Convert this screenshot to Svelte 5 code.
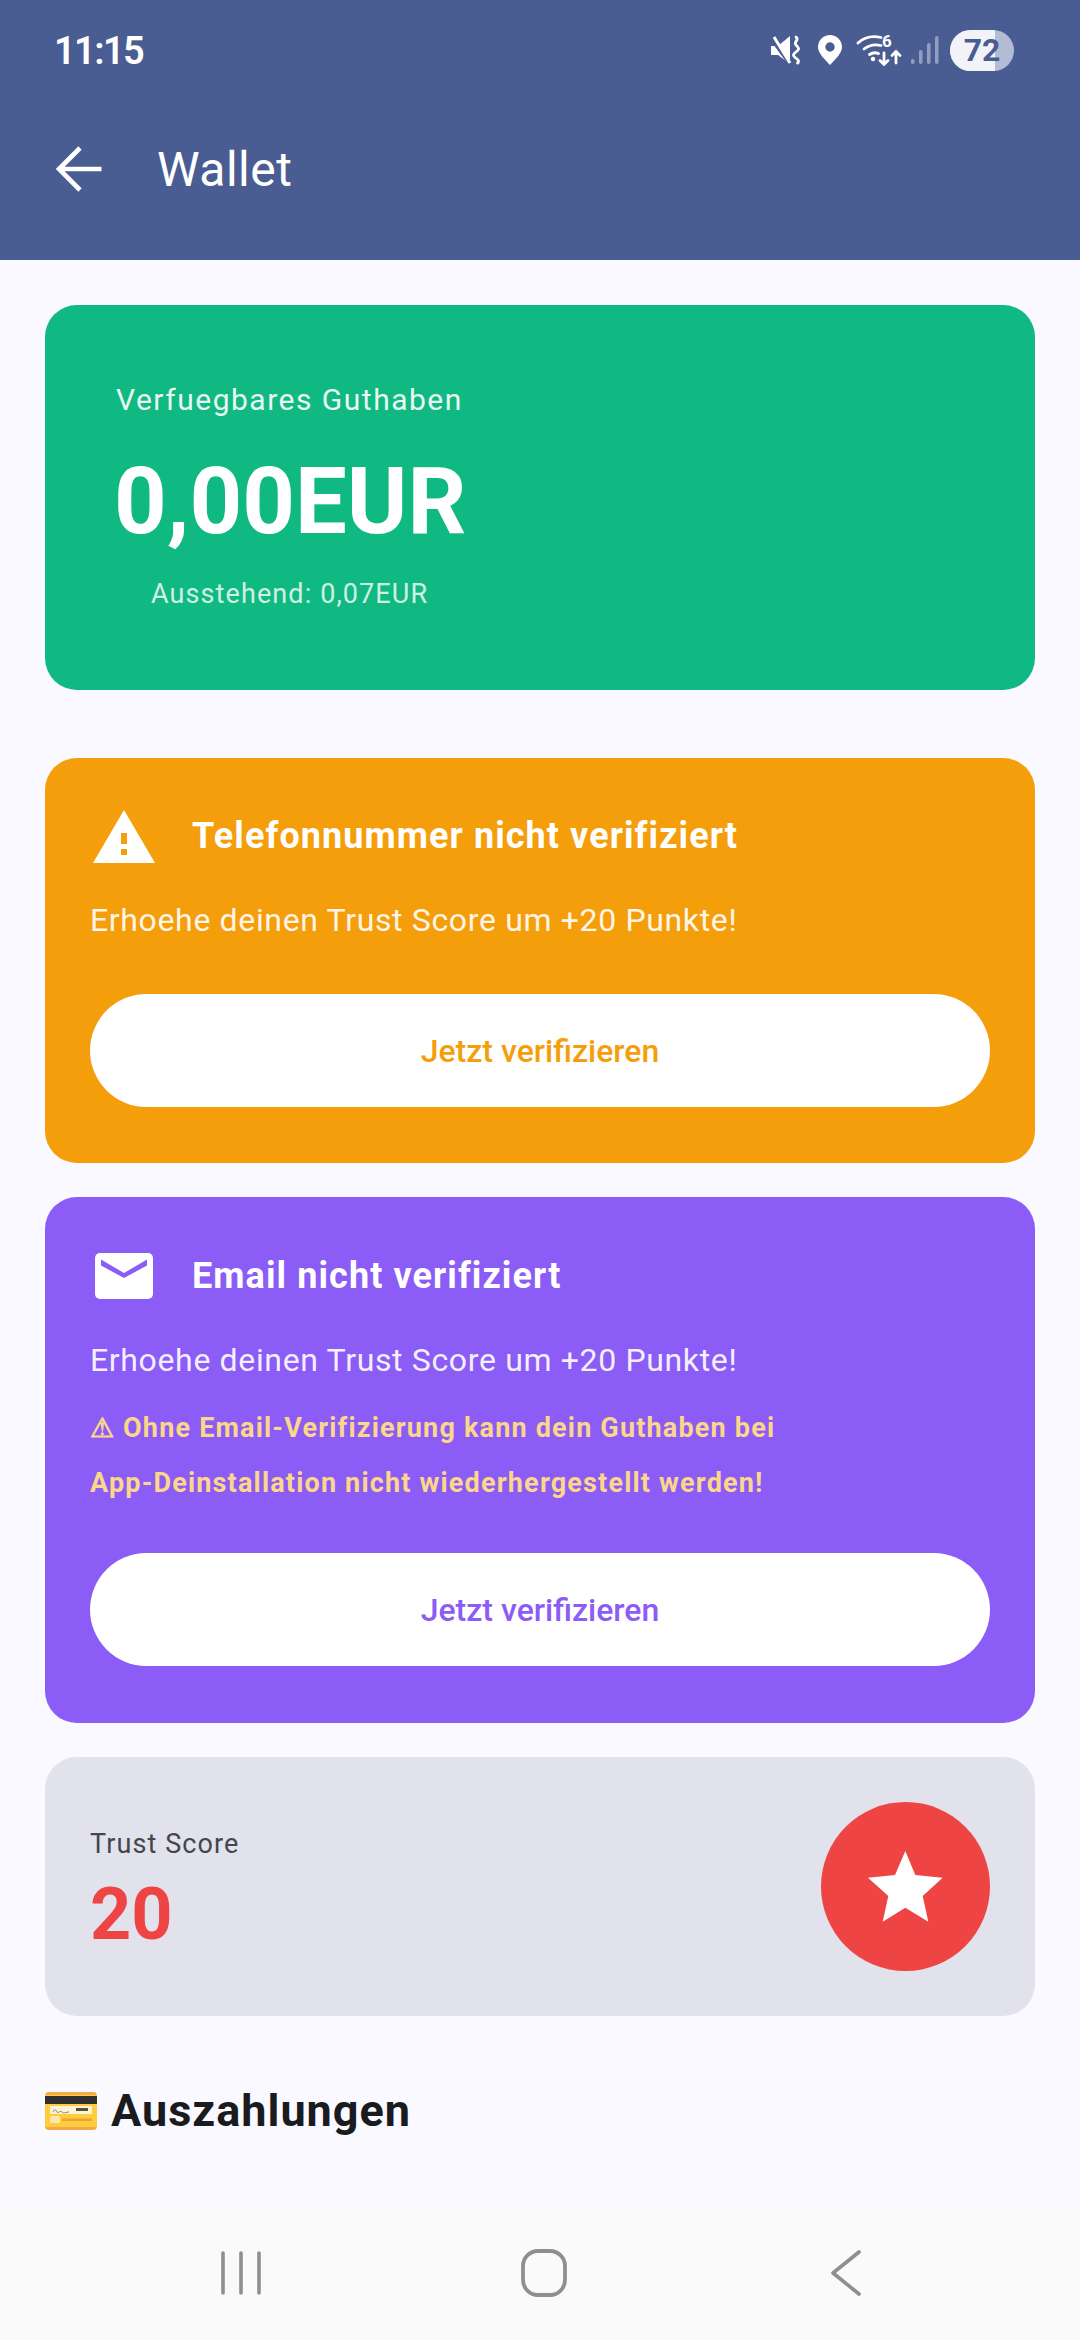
<script>
  const verifyText = 'Erhoehe deinen Trust Score um +20 Punkte!';
</script>

<div class="page">
  <header class="appbar">
    <div class="status">
      <span class="time">11:15</span>
      <div class="status-icons">
        <svg class="i-mute" viewBox="0 0 32 30" width="32" height="30" aria-hidden="true">
          <path fill="#fff" d="M0 11h7l12-10v28L7 20H0z"/>
          <path d="M0 0l22 30" stroke="#4a5d92" stroke-width="3" fill="none" transform="translate(-2 1)"/>
          <path d="M3 2l16 26" stroke="#fff" stroke-width="3" fill="none"/>
          <path d="M25 2c4 3-3 5 0 8s4 4 0 7-3 4 1 7-1 4 1 4" stroke="#fff" stroke-width="2.800" fill="none" stroke-linecap="round"/>
        </svg>
        <svg class="i-pin" viewBox="0 0 24 30" width="24" height="30" aria-hidden="true">
          <path fill="#fff" fill-rule="evenodd" d="M12 0C5.400 0 0 5.300 0 12c0 6.500 7 12.500 12 18 5-5.500 12-11.500 12-18C24 5.300 18.600 0 12 0zm0 7.300a4.700 4.700 0 1 1 0 9.400 4.700 4.700 0 0 1 0-9.400z"/>
        </svg>
        <div class="wifi">
          <svg viewBox="0 0 46 32" width="46" height="32" aria-hidden="true">
            <g fill="none" stroke="#fff" stroke-width="2.800" stroke-linecap="round">
              <path d="M2 9C8 3.500 16 1.500 25 3.500"/>
              <path d="M8 15c5-4 11-5 17-3.500"/>
              <path d="M13.500 20.500c3-2 6-2.300 9-1"/>
              <path d="M28 19v11M24 26.500l4 4 4-4"/>
              <path d="M40 29V18M36 21.500l4-4 4 4"/>
            </g>
            <circle cx="17" cy="25" r="2.200" fill="#fff"/>
          </svg>
          <span class="wifi-six">6</span>
        </div>
        <svg class="i-signal" viewBox="0 0 28 28" width="28" height="28" aria-hidden="true">
          <g fill="#fff" opacity=".4">
            <rect x="0" y="23" width="3.500" height="5" rx="1.700"/>
            <rect x="8" y="14" width="3.500" height="14" rx="1.700"/>
            <rect x="16" y="7" width="3.500" height="21" rx="1.700"/>
            <rect x="24" y="0" width="3.500" height="28" rx="1.700"/>
          </g>
        </svg>
        <div class="battery"><span class="battery-fill"></span><span class="battery-num">72</span></div>
      </div>
    </div>
    <div class="toolbar">
      <svg viewBox="0 0 46 46" width="46" height="46" aria-hidden="true">
        <path d="M45.500 23H4M24 2 3 23l21 21" fill="none" stroke="#fff" stroke-width="4.600"/>
      </svg>
      <h1>Wallet</h1>
    </div>
  </header>

  <main>
    <section class="balance">
      <p class="b-label">Verfuegbares Guthaben</p>
      <p class="b-amount">0,00EUR</p>
      <p class="b-pending">Ausstehend: 0,07EUR</p>
    </section>

    <section class="card orange">
      <div class="card-head">
        <svg viewBox="0 0 62 53" width="62" height="53" aria-hidden="true">
          <path fill="#fff" fill-rule="evenodd" d="M31 0l31 53H0zM28 23v11h6V23zm0 16v6h6v-6z"/>
        </svg>
        <h2>Telefonnummer nicht verifiziert</h2>
      </div>
      <p class="card-text">{verifyText}</p>
      <button class="cta">Jetzt verifizieren</button>
    </section>

    <section class="card purple">
      <div class="card-head">
        <svg viewBox="0 0 58 46" width="58" height="46" aria-hidden="true">
          <rect width="58" height="46" rx="5" fill="#fff"/>
          <path d="M6 6.500 29 20 52 6.500v6L29 25 6 12.500z" fill="#8b5cf6"/>
        </svg>
        <h2>Email nicht verifiziert</h2>
      </div>
      <p class="card-text">{verifyText}</p>
      <p class="warn">⚠ Ohne Email-Verifizierung kann dein Guthaben bei App-Deinstallation nicht wiederhergestellt werden!</p>
      <button class="cta">Jetzt verifizieren</button>
    </section>

    <section class="score">
      <div class="s-text">
        <p class="s-label">Trust Score</p>
        <p class="s-value">20</p>
      </div>
      <div class="s-badge">
        <svg viewBox="0 0 75 71" width="75" height="71" aria-hidden="true">
          <path fill="#fff" d="M37.300 0l10 24 27.400 2.700-20 18.300 5.600 25.700-23-14-22.600 14 5.600-25.700L0 26.700 27 24z"/>
        </svg>
      </div>
    </section>

    <h3 class="payout">
      <svg viewBox="0 0 52 38" width="52" height="38" aria-hidden="true">
        <rect width="52" height="38" rx="4" fill="#f6a94a"/>
        <rect y="3" width="52" height="32" fill="#ffcc3e"/>
        <rect y="4" width="52" height="8" fill="#30302e"/>
        <rect x="5" y="14" width="42" height="8" fill="#fff4d6"/>
        <path d="M8 20c2-4 3-2 4 0s3-2 5 0 4 0 7 0" stroke="#6b6b55" stroke-width=".8" fill="none"/>
        <rect x="31" y="16" width="12" height="3" fill="#55523f"/>
        <rect x="5" y="24" width="10" height="7" rx="1.500" fill="#ffe8b0"/>
        <rect x="17" y="26.500" width="30" height="2.500" fill="#e8a43a"/>
      </svg>
      Auszahlungen
    </h3>
  </main>

  <nav class="navbar" aria-label="System">
    <svg viewBox="0 0 40 46" width="40" height="46" aria-hidden="true">
      <path d="M2 3v40M20 3v40M38 3v40" stroke="#8f8f8f" stroke-width="3.600" stroke-linecap="round"/>
    </svg>
    <svg viewBox="0 0 46 48" width="46" height="48" aria-hidden="true">
      <rect x="2" y="2" width="42" height="44" rx="15" fill="none" stroke="#8f8f8f" stroke-width="3.800"/>
    </svg>
    <svg viewBox="0 0 30 46" width="30" height="46" aria-hidden="true">
      <path d="M28 2 2 23l26 21" fill="none" stroke="#8f8f8f" stroke-width="3.600" stroke-linecap="round" stroke-linejoin="round"/>
    </svg>
  </nav>
</div>

<style>
  :global(body) {
    margin: 0;
    background: #f9f9ff;
  }
  p, h1, h2, h3 {
    margin: 0;
    font-weight: 400;
  }
  .page {
    width: 1080px;
    height: 2340px;
    display: flex;
    flex-direction: column;
    overflow: hidden;
    font-family: Roboto, sans-serif;
    background: #f9f9ff;
  }
  .appbar {
    flex: none;
    height: 260px;
    background: #4a5d92;
    color: #fff;
    display: flex;
    flex-direction: column;
  }
  .status {
    height: 100px;
    padding: 0 66px 0 54px;
    display: flex;
    align-items: center;
    justify-content: space-between;
  }
  .time {
    font-size: 38px;
    font-weight: 600;
    letter-spacing: -1.6px;
    position: relative;
    top: 1px;
  }
  .status-icons {
    display: flex;
    align-items: center;
  }
  .i-pin { margin-left: 15px; }
  .wifi {
    position: relative;
    width: 46px;
    height: 32px;
    margin-left: 14px;
  }
  .wifi svg { display: block; }
  .wifi-six {
    position: absolute;
    left: 26px;
    top: -1px;
    font-size: 17px;
    line-height: 17px;
    font-weight: 700;
  }
  .i-signal { margin-left: 9px; }
  .battery {
    position: relative;
    margin-left: 11px;
    width: 64px;
    height: 41px;
    border-radius: 21px;
    overflow: hidden;
    background: #b3bcd5;
    display: flex;
    align-items: center;
    justify-content: center;
  }
  .battery-fill {
    position: absolute;
    inset: 0 19px 0 0;
    background: #f1f3f9;
  }
  .battery-num {
    position: relative;
    color: #4a5d92;
    font-size: 32px;
    font-weight: 700;
  }
  .toolbar {
    flex: 1;
    display: flex;
    align-items: center;
    gap: 55px;
    padding: 0 0 22px 56px;
  }
  h1 {
    font-size: 48px;
    letter-spacing: 0.5px;
  }
  main {
    flex: 1;
    min-height: 0;
    padding: 45px 45px 0;
    display: flex;
    flex-direction: column;
  }
  .balance {
    height: 385px;
    flex: none;
    box-sizing: border-box;
    border-radius: 32px;
    background: #10b981;
    color: #fff;
    padding: 74px 71px 0;
    margin-bottom: 68px;
  }
  .b-label {
    font-size: 30px;
    line-height: 42px;
    letter-spacing: 1.5px;
    opacity: 0.9;
  }
  .b-amount {
    font-size: 92px;
    line-height: 112px;
    font-weight: 700;
    margin-top: 25px;
    margin-left: -2px;
  }
  .b-pending {
    font-size: 27px;
    line-height: 38px;
    letter-spacing: 1.1px;
    margin: 17px 0 0 35px;
    opacity: 0.8;
  }
  .card {
    flex: none;
    border-radius: 32px;
    color: #fff;
    padding: 51px 45px 56px;
    margin-bottom: 34px;
  }
  .orange {
    background: #f59e0b;
    --accent: #f59e0b;
  }
  .purple {
    padding: 52px 45px 57px;
    background: #8b5cf6;
    --accent: #8b5cf6;
  }
  .card-head {
    display: flex;
    align-items: center;
    height: 54px;
  }
  .card-head svg {
    flex: none;
    margin-left: 3px;
    margin-right: 37px;
  }
  .purple .card-head svg {
    margin-left: 5px;
    margin-right: 39px;
  }
  .card-head h2 {
    font-size: 36px;
    font-weight: 700;
    letter-spacing: 1.08px;
  }
  .card-text {
    font-size: 32px;
    line-height: 44px;
    margin-top: 35px;
    letter-spacing: 0.65px;
    opacity: 0.9;
  }
  .warn {
    font-size: 27px;
    line-height: 55px;
    font-weight: 700;
    letter-spacing: 1.18px;
    color: #fcd68a;
    margin-top: 19px;
    max-width: 720px;
  }
  .cta {
    display: block;
    width: 100%;
    height: 113px;
    border: 0;
    border-radius: 57px;
    background: #fff;
    color: var(--accent);
    font: 500 32px Roboto, sans-serif;
    margin-top: 52px;
  }
  .purple .cta {
    margin-top: 42px;
  }
  .score {
    height: 259px;
    flex: none;
    box-sizing: border-box;
    border-radius: 32px;
    background: #e2e2ec;
    padding: 0 45px;
    display: flex;
    align-items: center;
    justify-content: space-between;
  }
  .s-text {
    padding-top: 9px;
  }
  .s-label {
    font-size: 27px;
    line-height: 38px;
    letter-spacing: 1.1px;
    color: #44464f;
  }
  .s-value {
    font-size: 72px;
    line-height: 84px;
    font-weight: 700;
    color: #ef4444;
    margin-top: 10px;
  }
  .s-badge {
    width: 169px;
    height: 169px;
    border-radius: 50%;
    background: #ef4444;
    display: flex;
    align-items: center;
    justify-content: center;
  }
  .payout {
    display: flex;
    align-items: center;
    gap: 14px;
    margin-top: 59px;
    font-size: 45px;
    line-height: 72px;
    font-weight: 700;
    color: #1a1b1f;
    letter-spacing: 1px;
  }
  .navbar {
    flex: none;
    height: 134px;
    background: #fafafa;
    display: grid;
    grid-template-columns: repeat(3, 302.5px);
    justify-items: center;
    align-items: center;
    padding-left: 90px;
  }
</style>
